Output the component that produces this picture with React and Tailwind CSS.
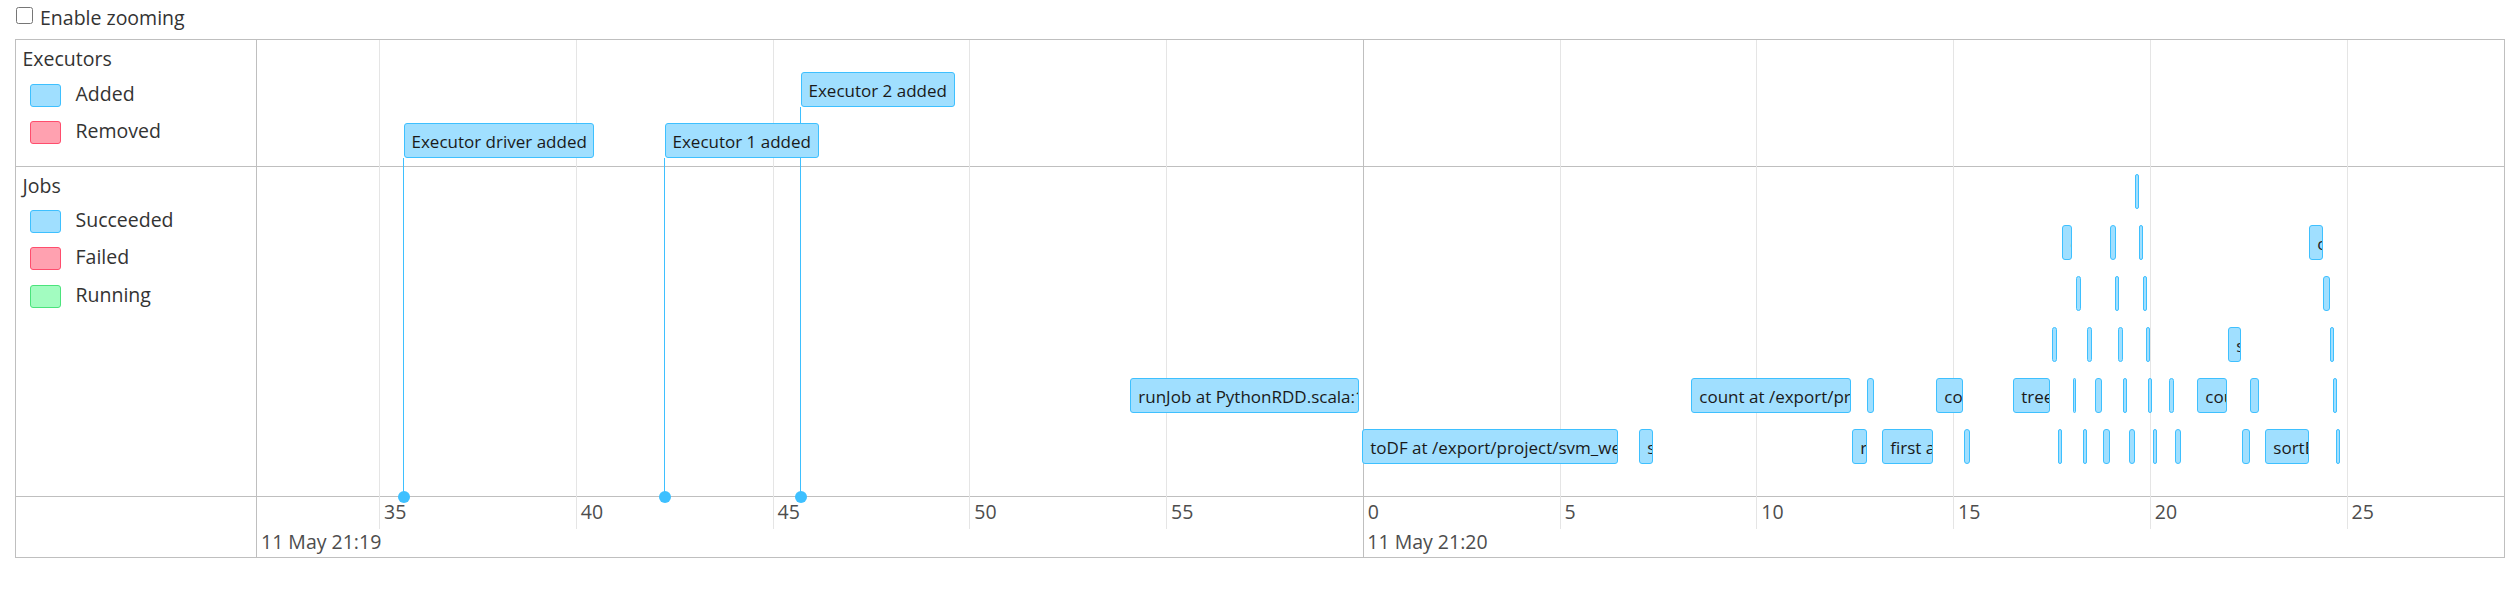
import React from 'react';

// timeline scale: px per second and the x of 21:20:00 (page coordinates)
const SEC = 39.35;
const ZERO = 1363.3;
const PANEL_X = 257;
const xAt = (t) => ZERO + t * SEC;

const JOB_ROWS = [134, 185, 236, 287, 338, 389];
const EXEC_ROWS = [32, 83];

const executors = [
  { row: 1, l: 403.5, r: 594.3, text: 'Executor driver added' },
  { row: 1, l: 664.5, r: 819.3, text: 'Executor 1 added' },
  { row: 0, l: 800.5, r: 955.3, text: 'Executor 2 added' },
];

const jobs = [
  // row 0
  { row: 0, l: 2135.3, r: 2139 },
  // row 1
  { row: 1, l: 2062.3, r: 2071.7, text: 'count at /export/project/svm_week.py:88' },
  { row: 1, l: 2110, r: 2115.7 },
  { row: 1, l: 2139.3, r: 2142.7 },
  { row: 1, l: 2309.3, r: 2322.7, text: 'count at /export/project/svm_week.py:120' },
  // row 2
  { row: 2, l: 2076, r: 2080.7 },
  { row: 2, l: 2115, r: 2118 },
  { row: 2, l: 2143, r: 2146 },
  { row: 2, l: 2323.3, r: 2329.7 },
  // row 3
  { row: 3, l: 2052, r: 2056.7 },
  { row: 3, l: 2087.3, r: 2092 },
  { row: 3, l: 2118.3, r: 2123 },
  { row: 3, l: 2146.3, r: 2149 },
  { row: 3, l: 2228.3, r: 2240.7, text: 'sortBy at /export/project/svm_week.py:102' },
  { row: 3, l: 2330.3, r: 2334 },
  // row 4
  { row: 4, l: 1130.3, r: 1359.3, text: 'runJob at PythonRDD.scala:153' },
  { row: 4, l: 1691.3, r: 1850.7, text: 'count at /export/project/svm_week.py:54' },
  { row: 4, l: 1867.3, r: 1873.7 },
  { row: 4, l: 1936.3, r: 1962.7, text: 'count at /export/project/svm_week.py:61' },
  { row: 4, l: 2013.3, r: 2049.7, text: 'treeAggregate at RDDLossFunction.scala:61' },
  { row: 4, l: 2072.5, r: 2076 },
  { row: 4, l: 2095.3, r: 2102 },
  { row: 4, l: 2123.3, r: 2126 },
  { row: 4, l: 2148, r: 2152 },
  { row: 4, l: 2169, r: 2174 },
  { row: 4, l: 2197.3, r: 2226.7, text: 'count at /export/project/svm_week.py:97' },
  { row: 4, l: 2250, r: 2258.7 },
  { row: 4, l: 2333.3, r: 2336 },
  // row 5
  { row: 5, l: 1362.3, r: 1618.3, text: 'toDF at /export/project/svm_week.py:35' },
  { row: 5, l: 1639.3, r: 1652.7, text: 'sortBy at /export/project/svm_week.py:41' },
  { row: 5, l: 1852.3, r: 1866.7, text: 'runJob at PythonRDD.scala:153' },
  { row: 5, l: 1882.3, r: 1932.7, text: 'first at /export/project/svm_week.py:58' },
  { row: 5, l: 1964.3, r: 1969.7 },
  { row: 5, l: 2058.3, r: 2062 },
  { row: 5, l: 2083, r: 2087 },
  { row: 5, l: 2103, r: 2110 },
  { row: 5, l: 2129, r: 2135 },
  { row: 5, l: 2153, r: 2156 },
  { row: 5, l: 2175.3, r: 2181 },
  { row: 5, l: 2242.3, r: 2249.7 },
  { row: 5, l: 2265.3, r: 2308.7, text: 'sortBy at /export/project/svm_week.py:110' },
  { row: 5, l: 2336, r: 2339 },
];

const ticks = [-25, -20, -15, -10, -5, 0, 5, 10, 15, 20, 25];

const Swatch = ({ fill, stroke }) => (
  <span
    className="ml-[7px] h-[23px] w-[31px] shrink-0 rounded-[3px] border-[1.5px]"
    style={{ backgroundColor: fill, borderColor: stroke }}
  />
);

const LegendRow = ({ label, fill, stroke }) => (
  <div className="flex h-[37.5px] items-center">
    <Swatch fill={fill} stroke={stroke} />
    <span className="ml-[15px] pb-[3px] leading-[26px]">{label}</span>
  </div>
);

const Item = ({ l, r, top, text }) => (
  <div
    className="absolute flex h-[35px] items-center overflow-hidden rounded-[3px] border-[1.5px] border-[#3ec0ff] bg-[#a0dfff] pt-[2px] text-[17px] text-[#1a1a1a]"
    style={{ left: l - PANEL_X, top, width: Math.max(r - l, 3.5) }}
  >
    {text && <span className="ml-[7px] shrink-0 whitespace-nowrap leading-[22px]">{text}</span>}
  </div>
);

export default function App() {
  return (
    <div className="min-h-screen bg-white font-['Open_Sans',sans-serif] text-[19.5px] text-[#333]">
      {/* zoom toggle */}
      <div className="flex h-[39px] items-start pl-[16px]">
        <input type="checkbox" className="m-0 mt-[7px] h-[17px] w-[17px]" />
        <span className="ml-[7px] mt-[4.5px] leading-[26px]">Enable zooming</span>
      </div>

      {/* timeline */}
      <div className="ml-[15px] flex h-[519px] w-[2490px] border border-[#bfbfbf]">
        {/* group labels */}
        <div className="flex w-[241px] shrink-0 flex-col border-r border-[#bfbfbf]">
          <div className="h-[127px] border-b border-[#bfbfbf] pl-[6.5px] pt-[6px]">
            <div className="leading-[26px]">Executors</div>
            <div className="mt-[4.5px]">
              <LegendRow label="Added" fill="#a0dfff" stroke="#3ec0ff" />
              <LegendRow label="Removed" fill="#ffa1b0" stroke="#ff4d6d" />
            </div>
          </div>
          <div className="h-[330px] border-b border-[#bfbfbf] pl-[6.5px] pt-[5.5px]">
            <div className="leading-[26px]">Jobs</div>
            <div className="mt-[4px]">
              <LegendRow label="Succeeded" fill="#a0dfff" stroke="#3ec0ff" />
              <LegendRow label="Failed" fill="#ffa1b0" stroke="#ff4d6d" />
              <LegendRow label="Running" fill="#a2fcc0" stroke="#4be37c" />
            </div>
          </div>
          <div className="h-[60px]" />
        </div>

        {/* panel */}
        <div className="relative flex-1 overflow-hidden">
          {/* grid */}
          {ticks.map((t) => (
            <div
              key={'g' + t}
              className={
                t === 0
                  ? 'absolute top-0 h-[517px] w-px bg-[#bfbfbf]'
                  : 'absolute top-0 h-[489px] w-px bg-[#e5e5e5]'
              }
              style={{ left: Math.floor(xAt(t)) - PANEL_X }}
            />
          ))}

          <div className="h-[127px] border-b border-[#bfbfbf]" />
          <div className="h-[330px] border-b border-[#bfbfbf]" />
          <div className="h-[60px]" />

          {/* executor lines */}
          {executors.map((e) => (
            <div
              key={'l' + e.text}
              className="absolute w-px bg-[#3ec0ff]"
              style={{ left: Math.floor(e.l) - PANEL_X, top: EXEC_ROWS[e.row] + 35, height: 456.5 - EXEC_ROWS[e.row] - 35 }}
            />
          ))}
          {executors.map((e) => (
            <div
              key={'d' + e.text}
              className="absolute h-[12px] w-[12px] rounded-full bg-[#3ec0ff]"
              style={{ left: e.l - PANEL_X - 6, top: 450.5 }}
            />
          ))}
          {executors.map((e) => (
            <Item key={'e' + e.text} l={e.l} r={e.r} top={EXEC_ROWS[e.row]} text={e.text} />
          ))}

          {jobs.map((j, i) => (
            <Item key={'j' + i} l={j.l} r={j.r} top={JOB_ROWS[j.row]} text={j.text} />
          ))}

          {/* axis labels */}
          {ticks.map((t) => (
            <div
              key={'m' + t}
              className="absolute top-[460.4px] whitespace-nowrap leading-[24px] text-[#4d4d4d]"
              style={{ left: xAt(t) - PANEL_X + 4.5 }}
            >
              {t < 0 ? 60 + t : t}
            </div>
          ))}
          <div className="absolute left-[4px] top-[490.4px] whitespace-nowrap leading-[24px] text-[#4d4d4d]">
            11 May 21:19
          </div>
          <div
            className="absolute top-[490.4px] whitespace-nowrap leading-[24px] text-[#4d4d4d]"
            style={{ left: xAt(0) - PANEL_X + 4 }}
          >
            11 May 21:20
          </div>
        </div>
      </div>
    </div>
  );
}
